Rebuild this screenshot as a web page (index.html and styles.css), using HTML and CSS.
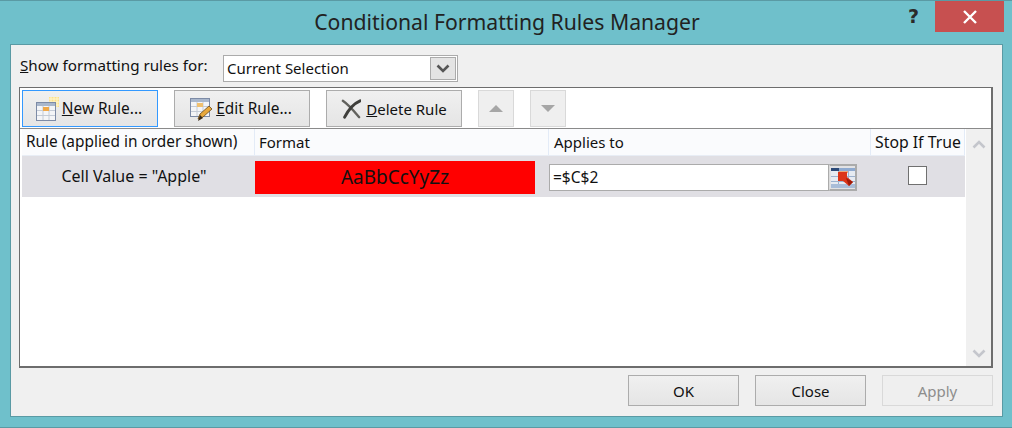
FILE: index.html
```html
<!DOCTYPE html>
<html lang="en">
<head>
  <meta charset="UTF-8">
  <title>Conditional Formatting Rules Manager</title>
  <link rel="stylesheet" href="styles.css">
</head>
<body>
  <div class="window">
    <div class="titlebar">
      <div></div>
      <div class="title">Conditional Formatting Rules Manager</div>
      <div class="controls">
        <span class="help">?</span>
        <div class="close-x">
          <svg width="14" height="14" viewBox="0 0 14 14"><path d="M1 1L13 13M13 1L1 13" stroke="#fff" stroke-width="2.4" fill="none"/></svg>
        </div>
      </div>
    </div>

    <div class="panel">
      <div class="show-row">
        <label class="show-label"><u>S</u>how formatting rules for:</label>
        <div class="select">
          <span class="select-text">Current Selection</span>
          <span class="select-btn">
            <svg width="14" height="9" viewBox="0 0 14 9"><path d="M1.5 1.5L7 7L12.5 1.5" stroke="#555" stroke-width="2.6" fill="none"/></svg>
          </span>
        </div>
      </div>

      <div class="rules-box">
        <div class="toolbar">
          <button class="btn tool-btn focused">
            <svg width="24" height="24" viewBox="0 0 24 24">
              <rect x="14" y="0" width="10" height="10" fill="#fbe08c"/>
              <path d="M14 2h10M14 5h10M14 8h10M16 0v10M19 0v10M22 0v10" stroke="#fff6cf"/>
              <rect x="1.5" y="5.5" width="19" height="18" fill="#f4f5f7" stroke="#7d8ba6"/>
              <rect x="2" y="6" width="18" height="3" fill="#a9b7cc"/>
              <path d="M2 13.5h18M2 18.5h18M8 9v14M14 9v14" stroke="#c4cbd6"/>
              <rect x="8" y="10" width="6" height="4" fill="#f0a848"/>
            </svg>
            <span class="rule-label"><u>N</u>ew Rule...</span>
          </button>
          <button class="btn tool-btn">
            <svg width="24" height="24" viewBox="0 0 24 24">
              <rect x="1.5" y="1.5" width="19" height="18" fill="#f4f5f7" stroke="#7d8ba6"/>
              <rect x="2" y="2" width="18" height="3" fill="#a9b7cc"/>
              <path d="M2 9.5h18M2 14.5h18M8 5v14M14 5v14" stroke="#c4cbd6"/>
              <rect x="8" y="6" width="6" height="4" fill="#f0c070"/>
              <path d="M9 22L11 17L20 9L23 12L14 20Z" fill="#e8a83c" stroke="#6a4a1a" stroke-width=".8"/>
              <path d="M9 24L11 18L14 21Z" fill="#3a2a18"/>
            </svg>
            <span class="rule-label"><u>E</u>dit Rule...</span>
          </button>
          <button class="btn tool-btn delete-btn">
            <svg width="20" height="20" viewBox="0 0 22 22">
              <path d="M2 2C8 6 14 13 20 20" stroke="#62625e" stroke-width="2.6" fill="none" stroke-linecap="round"/>
              <path d="M21 2C14 5 8 12 4 20" stroke="#3f3f3c" stroke-width="3.2" fill="none" stroke-linecap="round"/>
            </svg>
            <span><u>D</u>elete Rule</span>
          </button>
          <button class="btn arrow-btn" disabled>
            <svg width="14" height="7" viewBox="0 0 14 7"><path d="M7 0L14 7H0Z" fill="#a6a6a6"/></svg>
          </button>
          <button class="btn arrow-btn" disabled>
            <svg width="14" height="7" viewBox="0 0 14 7"><path d="M0 0H14L7 7Z" fill="#a6a6a6"/></svg>
          </button>
        </div>

        <div class="list-area">
          <div class="list">
            <div class="list-head">
              <div class="col-rule">Rule (applied in order shown)</div>
              <div class="col-format">Format</div>
              <div class="col-applies">Applies to</div>
              <div class="col-stop">Stop If True</div>
            </div>
            <div class="list-row">
              <div class="cell-rule">Cell Value = "Apple"</div>
              <div class="cell-format">AaBbCcYyZz</div>
              <div class="cell-applies">
                <span class="range-input">=$C$2</span>
                <span class="range-btn">
                  <svg width="24" height="20" viewBox="0 0 24 20">
                    <rect width="24" height="20" fill="#e6ebf2"/>
                    <rect width="8" height="3" fill="#2c4a78"/>
                    <rect x="8" width="16" height="3" fill="#8faad0"/>
                    <rect x="8" y="3" width="9" height="2" fill="#eea878"/>
                    <path d="M0 8.5h24M0 13.5h24M7.5 3v17M17.5 3v17" stroke="#9db2cf"/>
                    <rect y="16" width="24" height="4" fill="#a9bdd8"/>
                    <path d="M7 4h9v5l6 5-4 4-6-5H7Z" fill="#dc3518"/>
                    <path d="M15 10l7 4-4 4Z" fill="#a01a08"/>
                  </svg>
                </span>
              </div>
              <div class="cell-stop"><span class="checkbox"></span></div>
            </div>
          </div>
          <div class="scrollbar">
            <svg width="14" height="9" viewBox="0 0 14 9"><path d="M1.5 7.5L7 2L12.5 7.5" stroke="#c4c6cc" stroke-width="2.6" fill="none"/></svg>
            <svg width="14" height="9" viewBox="0 0 14 9"><path d="M1.5 1.5L7 7L12.5 1.5" stroke="#c4c6cc" stroke-width="2.6" fill="none"/></svg>
          </div>
        </div>
      </div>

      <div class="footer">
        <button class="btn foot-btn">OK</button>
        <button class="btn foot-btn">Close</button>
        <button class="btn foot-btn" disabled>Apply</button>
      </div>
    </div>
  </div>
</body>
</html>
```

FILE: styles.css
```css
* {
  box-sizing: border-box;
}

body {
  margin: 0;
  font-family: "Noto Sans", Arial, sans-serif;
  font-size: 15px;
  color: #111;
  background-color: #6fc0cb;
}

.window {
  width: 1012px;
  height: 428px;
  padding: 0 9px 10px 10px;
  display: flex;
  flex-direction: column;
  background-color: #6fc0cb;
  border-top: 1px solid #5a9aa4;
  border-bottom: 1px solid #5a9aa4;
}

.titlebar {
  height: 43px;
  flex: none;
  display: grid;
  grid-template-columns: 1fr auto 1fr;
  margin-right: -1px;
}

.title {
  font-size: 21.2px;
  line-height: 42px;
  color: #222;
}

.controls {
  display: flex;
  justify-content: flex-end;
  align-items: flex-start;
}

.help {
  width: 14px;
  margin-right: 13px;
  font-family: "DejaVu Sans", sans-serif;
  font-size: 19px;
  font-weight: bold;
  line-height: 30px;
  color: #2a2a2a;
}

.close-x {
  width: 69px;
  height: 31px;
  display: flex;
  align-items: center;
  justify-content: center;
  background-color: #c75050;
}

.panel {
  flex: 1;
  display: flex;
  flex-direction: column;
  padding: 10px 9px 0 8px;
  background-color: #f0f0f0;
  border: 1px solid #5a9aa4;
}

.show-row {
  height: 32px;
  display: flex;
  align-items: flex-start;
}

.show-label {
  width: 204px;
  font-size: 15.2px;
  line-height: 21px;
  padding-left: 1px;
}

.select {
  width: 235px;
  height: 27px;
  display: flex;
  align-items: center;
  justify-content: space-between;
  padding: 0 1px 0 3px;
  background-color: #fff;
  border: 1px solid #ababab;
}

.select-text {
  padding-bottom: 2px;
}

.select-btn {
  width: 26px;
  height: 23px;
  display: flex;
  align-items: center;
  justify-content: center;
  background-color: #e4e4e4;
  border: 1px solid #ababab;
}

.rules-box {
  height: 281px;
  display: flex;
  flex-direction: column;
  background-color: #fff;
  border: 1px solid #6d6d6d;
  border-right-width: 2px;
  border-bottom-width: 2px;
}

.btn {
  display: flex;
  align-items: center;
  justify-content: center;
  padding: 0;
  font-family: inherit;
  font-size: 15px;
  color: #111;
  background: linear-gradient(#f0f0f0, #e5e5e5);
  border: 1px solid #acacac;
}

.btn:disabled {
  color: #8d8d8d;
  background: #efefef;
  border-color: #d9d9d9;
}

.toolbar {
  height: 41px;
  flex: none;
  display: flex;
  align-items: flex-start;
  gap: 16px;
  padding: 2px 0 0 2px;
  border-bottom: 1px solid #8a8a8a;
}

.tool-btn {
  width: 136px;
  height: 37px;
  padding-right: 3px;
  gap: 3px;
}

.tool-btn.focused {
  border-color: #3399ff;
}

.rule-label {
  font-size: 15.4px;
}

.delete-btn {
  padding-right: 0;
  gap: 5px;
}

.arrow-btn {
  width: 36px;
  height: 37px;
}

.list-area {
  flex: 1;
  display: flex;
  padding-left: 2px;
}

.list {
  width: 943px;
}

.list-head {
  height: 27px;
  display: grid;
  grid-template-columns: 233px 294px 322px 94px;
  background-color: #fafbfd;
  border-bottom: 1px solid #e8edf5;
  line-height: 26px;
}

.list-head div {
  padding-left: 4px;
  border-right: 1px solid #e3ebf7;
}

.list-head .col-rule {
  font-size: 15.4px;
}

.list-head .col-applies {
  padding-left: 5px;
}

.list-head .col-stop {
  font-size: 15.8px;
  white-space: nowrap;
}

.list-row {
  height: 41px;
  display: grid;
  grid-template-columns: 233px 294px 322px 94px;
  background-color: #e0dfe4;
}

.cell-rule {
  padding-right: 9px;
  text-align: center;
  font-size: 16px;
  line-height: 41px;
}

.cell-format {
  width: 280px;
  height: 33px;
  margin-top: 5px;
  text-align: center;
  line-height: 33px;
  font-size: 19px;
  background-color: #ff0000;
}

.cell-applies {
  display: flex;
  align-items: flex-start;
  padding-top: 8px;
}

.range-input {
  width: 280px;
  height: 27px;
  padding-left: 3px;
  font-size: 15.5px;
  line-height: 25px;
  background-color: #fff;
  border: 1px solid #ababab;
}

.range-btn {
  width: 28px;
  height: 27px;
  display: flex;
  align-items: center;
  justify-content: center;
  background-color: #e2e2e4;
  border: 2px solid #ababab;
  border-left: 1px solid #dcdcdc;
}

.cell-stop {
  display: flex;
  justify-content: center;
  padding: 10px 2px 0 0;
}

.checkbox {
  width: 19px;
  height: 19px;
  background-color: #fff;
  border: 1px solid #707070;
}

.scrollbar {
  width: 26px;
  margin-left: 1px;
  display: flex;
  flex-direction: column;
  align-items: center;
  justify-content: space-between;
  padding: 11px 0 8px;
  background-color: #f0f0f0;
}

.footer {
  display: flex;
  justify-content: flex-end;
  gap: 16px;
  padding-top: 7px;
}

.foot-btn {
  width: 111px;
  height: 31px;
}
```
